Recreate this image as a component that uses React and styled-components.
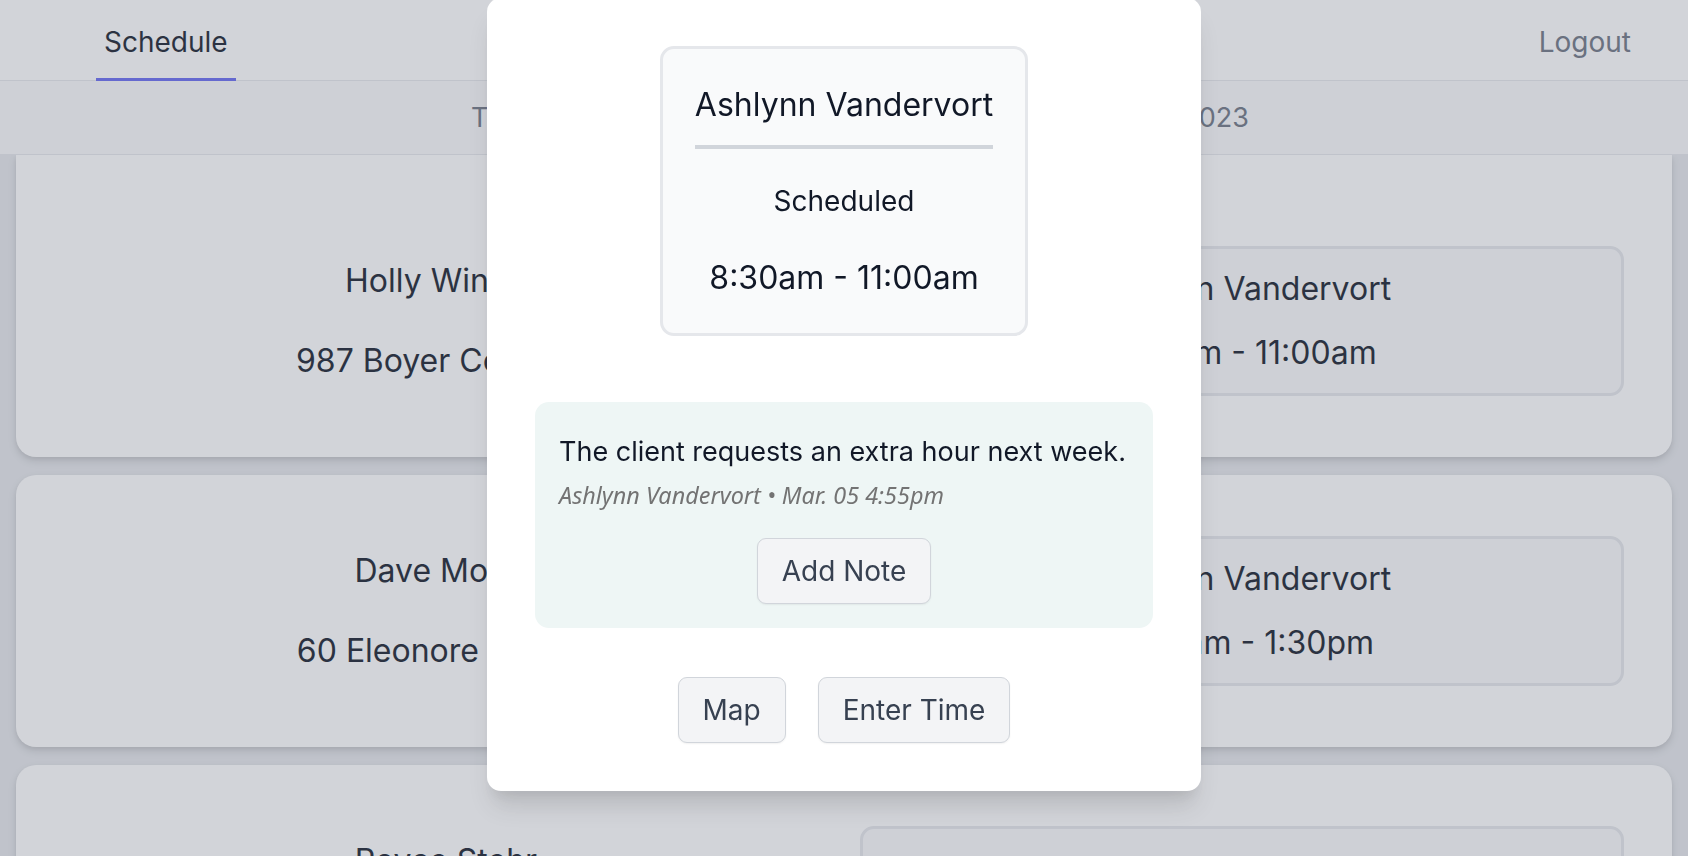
import React from "react";
import styled, { createGlobalStyle, css } from "styled-components";

const GlobalStyle = createGlobalStyle`
  * { box-sizing: border-box; }
  html, body { margin: 0; padding: 0; height: 100%; }
  body {
    font-family: Inter, "Noto Sans", sans-serif;
    background: #e5e7eb;
    color: #111827;
    overflow: hidden;
  }
`;

const Page = styled.div`
  display: flex;
  flex-direction: column;
  height: 100vh;
`;

const Header = styled.header`
  height: 81px;
  background: #ffffff;
  border-bottom: 1px solid #e5e7eb;
  display: flex;
  align-items: stretch;
  justify-content: space-between;
  padding: 0 49px 0 96px;
`;

const Tab = styled.a`
  display: flex;
  align-items: center;
  padding: 6px 8px 0;
  margin-bottom: -1px;
  font-size: 28px;
  color: ${(p) => (p.$active ? "#111827" : "#6b7280")};
  border-bottom: 3px solid ${(p) => (p.$active ? "#6366f1" : "transparent")};
  text-decoration: none;
`;

const SubHeader = styled.div`
  height: 74px;
  background: #f9fafb;
  border-bottom: 1px solid #e5e7eb;
  display: flex;
  align-items: center;
  justify-content: center;
`;

const DateNav = styled.div`
  width: 778px;
  margin-left: 32px;
  display: flex;
  justify-content: space-between;
  font-size: 27px;
  color: #6b7280;
`;

const List = styled.main`
  flex: 1;
  overflow: hidden;
  display: flex;
  flex-direction: column;
  gap: 18px;
  padding: 0 16px;
`;

const Card = styled.div`
  flex-shrink: 0;
  background: #ffffff;
  border-radius: 20px;
  box-shadow: 0 4px 8px rgba(0, 0, 0, 0.12), 0 2px 4px rgba(0, 0, 0, 0.06);
  display: grid;
  grid-template-columns: 1fr 1fr;
  gap: 32px;
  align-items: center;
  padding: 61px 48px;
  ${(p) =>
    p.$first &&
    css`
      border-top-left-radius: 0;
      border-top-right-radius: 0;
      padding-top: 91px;
    `}
`;

const ClientCol = styled.div`
  display: flex;
  flex-direction: column;
  align-items: center;
  gap: 44px;
  font-size: 32px;
  line-height: 36px;
  color: #111827;
  text-align: center;
`;

const ShiftBox = styled.div`
  border: 3px solid #e5e7eb;
  background: #f9fafb;
  border-radius: 14px;
  padding: 22px 24px;
  display: flex;
  flex-direction: column;
  align-items: center;
  gap: 28px;
  font-size: 32px;
  line-height: 36px;
  color: #111827;
`;

const Overlay = styled.div`
  position: fixed;
  inset: 0;
  background: rgba(107, 114, 128, 0.3);
  display: flex;
  justify-content: center;
  align-items: flex-end;
  padding-bottom: 65px;
`;

const Modal = styled.div`
  flex-shrink: 0;
  width: 714px;
  background: #ffffff;
  border-radius: 14px;
  box-shadow: 0 20px 25px -5px rgba(0, 0, 0, 0.12), 0 10px 10px -5px rgba(0, 0, 0, 0.05);
  padding: 48px;
  display: flex;
  flex-direction: column;
  align-items: center;
`;

const StatusCard = styled.div`
  width: 368px;
  border: 3px solid #e5e7eb;
  background: #f9fafb;
  border-radius: 14px;
  padding: 38px 32px 37px;
  display: flex;
  flex-direction: column;
  align-items: center;
  text-align: center;
  color: #111827;
`;

const Title = styled.div`
  font-size: 32px;
  line-height: 36px;
  white-space: nowrap;
`;

const Divider = styled.div`
  align-self: stretch;
  height: 4px;
  background: #d1d5db;
  margin-top: 22px;
`;

const Status = styled.div`
  margin-top: 36px;
  font-size: 28px;
  line-height: 32px;
`;

const Time = styled.div`
  margin-top: 43px;
  font-size: 32px;
  line-height: 36px;
`;

const NoteBox = styled.div`
  align-self: stretch;
  margin-top: 66px;
  background: #eef6f5;
  border-radius: 14px;
  padding: 32px 24px 24px;
  display: flex;
  flex-direction: column;
`;

const NoteText = styled.p`
  margin: 0;
  font-size: 27px;
  line-height: 36px;
  color: #111827;
`;

const NoteMeta = styled.p`
  margin: 10px 0 0;
  font-family: "Noto Sans", "Open Sans", sans-serif;
  font-style: italic;
  font-size: 23.4px;
  line-height: 30px;
  color: #737373;
`;

const Button = styled.button`
  font-family: Inter, sans-serif;
  font-size: 28px;
  line-height: 36px;
  color: #374151;
  background: #f3f4f6;
  border: 1px solid #d1d5db;
  border-radius: 9px;
  padding: 14px 24px;
  box-shadow: 0 1px 2px rgba(0, 0, 0, 0.06);
  cursor: pointer;
  ${(p) =>
    p.$center &&
    css`
      align-self: center;
      margin-top: 28px;
    `}
`;

const Actions = styled.div`
  margin-top: 49px;
  display: flex;
  gap: 32px;
  justify-content: center;
`;

const appointments = [
  { name: "Holly Windler", address: "987 Boyer Common", worker: "Ashlynn Vandervort", time: "8:30am - 11:00am" },
  { name: "Dave Moore", address: "60 Eleonore Square", worker: "Ashlynn Vandervort", time: "11:00am - 1:30pm" },
  { name: "Royce Stehr", address: "412 Kuhn Parkway", worker: "Ashlynn Vandervort", time: "2:00pm - 4:30pm" },
];

export default function App() {
  return (
    <>
      <GlobalStyle />
      <Page>
        <Header>
          <Tab $active href="#">Schedule</Tab>
          <Tab href="#">Logout</Tab>
        </Header>
        <SubHeader>
          <DateNav>
            <span>Today</span>
            <span>Tuesday, March 7, 2023</span>
          </DateNav>
        </SubHeader>
        <List>
          {appointments.map((a, i) => (
            <Card key={a.name} $first={i === 0}>
              <ClientCol>
                <span>{a.name}</span>
                <span>{a.address}</span>
              </ClientCol>
              <ShiftBox>
                <span>{a.worker}</span>
                <span>{a.time}</span>
              </ShiftBox>
            </Card>
          ))}
        </List>
      </Page>
      <Overlay>
        <Modal>
          <StatusCard>
            <Title>Ashlynn Vandervort</Title>
            <Divider />
            <Status>Scheduled</Status>
            <Time>8:30am - 11:00am</Time>
          </StatusCard>
          <NoteBox>
            <NoteText>The client requests an extra hour next week.</NoteText>
            <NoteMeta>Ashlynn Vandervort • Mar. 05 4:55pm</NoteMeta>
            <Button $center>Add Note</Button>
          </NoteBox>
          <Actions>
            <Button>Map</Button>
            <Button>Enter Time</Button>
          </Actions>
        </Modal>
      </Overlay>
    </>
  );
}
